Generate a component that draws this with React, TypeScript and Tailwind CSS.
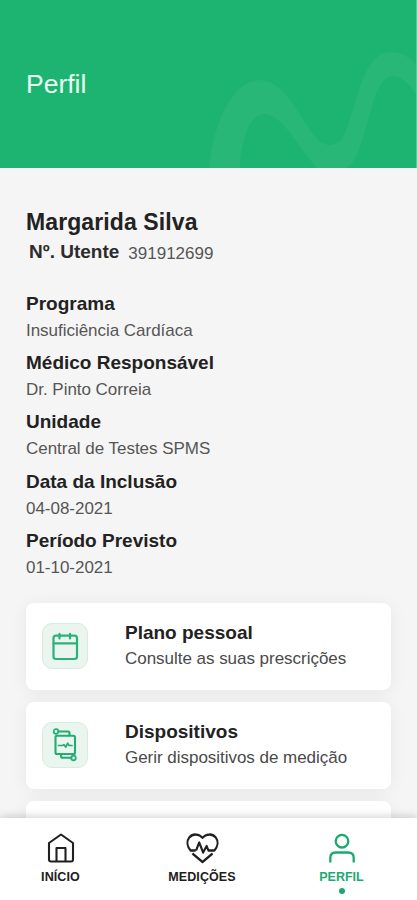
import type { ReactNode } from 'react'

interface Field {
  label: string
  value: string
}

const fields: Field[] = [
  { label: 'Programa', value: 'Insuficiência Cardíaca' },
  { label: 'Médico Responsável', value: 'Dr. Pinto Correia' },
  { label: 'Unidade', value: 'Central de Testes SPMS' },
  { label: 'Data da Inclusão', value: '04-08-2021' },
  { label: 'Período Previsto', value: '01-10-2021' },
]

function CalendarIcon() {
  return (
    <svg className="shrink-0" width="46" height="46" viewBox="0 0 46 46" fill="none" stroke="#2bb27b" strokeWidth="2.2" strokeLinecap="round" strokeLinejoin="round">
      <rect x="11.5" y="12.7" width="23.5" height="23.3" rx="2.5" />
      <path d="M11.5 20.3H35M17.5 10.9v4.600M28 10.900v4.600" />
    </svg>
  )
}

function DeviceIcon() {
  return (
    <svg className="shrink-0" width="46" height="46" viewBox="0 0 46 46" fill="none" stroke="#23ad73" strokeWidth="2.1" strokeLinecap="round" strokeLinejoin="round">
      <rect x="13.5" y="13.8" width="19.5" height="18.2" rx="1.5" />
      <circle cx="14" cy="9.5" r="2.3" strokeWidth="1.7" />
      <path d="M16.5 9.5h9.500q1.500 0 1.500 1.500V13M19 32.500V34q0 1.800 1.800 1.800h8.700" />
      <circle cx="31.500" cy="36" r="2.300" strokeWidth="1.700" />
      <path d="M16.500 23.500h4l1.500-.8 1.700 2.300 2-3.800 1.300 2.300h3" strokeWidth="1.700" />
    </svg>
  )
}

function HomeIcon() {
  return (
    <svg width="30" height="32" viewBox="0 0 30 32" fill="none" stroke="currentColor" strokeWidth="2.100" strokeLinejoin="round">
      <path d="M3 11 15 2.500 27 11v16.500q0 2-2 2H5q-2 0-2-2z" />
      <path d="M10.500 29.500V16h9v13.500" />
    </svg>
  )
}

function HeartIcon() {
  return (
    <svg width="33" height="32" viewBox="0 0 36 32" preserveAspectRatio="none" fill="none" stroke="currentColor" strokeWidth="2.300" strokeLinejoin="round">
      <path d="M10.500 18.500H5C1 14 .5 9 3.500 5.500 7.500 1 14.500 2 18 5.800 21.500 2 28.500 1 32.500 5.500c3 3.500 2.500 8.500-1.500 13h-6.500l-2-4.500-3.800 6.500-4.300-10-3.400 8" />
      <path d="M7 21.500 18 30l11-8.500" />
    </svg>
  )
}

function UserIcon() {
  return (
    <svg width="30" height="32" viewBox="0 0 30 32" fill="none" stroke="currentColor" strokeWidth="2.300">
      <circle cx="15" cy="9.200" r="6.300" />
      <path d="M3.300 30.500V26q0-5.500 5.500-5.500h12.400q5.500 0 5.500 5.500v4.500" />
    </svg>
  )
}

function Card({ icon, title, text }: { icon: ReactNode; title: string; text: string }) {
  return (
    <div className="flex h-[87px] items-center rounded-lg bg-white pl-4 shadow-[0_2px_18px_rgba(0,0,0,0.06)]">
      <div className="flex size-[46px] items-center justify-center rounded-[10px] border border-[#d5eddf] bg-[#e9f5ee]">
        {icon}
      </div>
      <div className="ml-[37px]">
        <h3 className="text-[19px] leading-[26px] font-bold whitespace-nowrap text-[#222]">{title}</h3>
        <p className="text-[17px] leading-[26px] tracking-[-0.03px] whitespace-nowrap text-[#4a4a4a]">{text}</p>
      </div>
    </div>
  )
}

export default function App() {
  return (
    <div className="flex h-[900px] w-[417px] flex-col overflow-hidden bg-[#f5f5f5] font-['Liberation_Sans',sans-serif]">
      <header className="relative h-[168px] shrink-0 border-r border-[#5cc797] bg-[#1db471]">
        <svg className="absolute inset-0" width="416" height="168" viewBox="0 0 416 168" fill="#28b776">
          <path d="M209 168C214 118 235 80 259 80C288 80 301 124 320 142Q331 149 342 139C356 116 360 52 391 52Q405 52 417 65V96Q405 76 393 76C374 76 371 121 357 154Q353 164 346 168H318C303 156 284 114 264 114C251 114 241 137 240 168z" />
        </svg>
        <h1 className="relative pt-[69px] pl-[26px] text-[26.5px] leading-[30px] text-[#eafff3]">Perfil</h1>
      </header>

      <main className="min-h-0 flex-1 overflow-hidden px-[26px] pt-[40px]">
        <h2 className="text-[23px] leading-[28px] font-bold tracking-[0.1px] text-[#222]">Margarida Silva</h2>
        <div className="flex h-[30px] items-baseline pl-[3px] leading-[32px]">
          <span className="text-[19px] font-bold text-[#2c2c2c]">Nº. Utente</span>
          <span className="relative top-px ml-[9px] text-[17px] text-[#555]">391912699</span>
        </div>

        <dl className="mt-[24px]">
          {fields.map((field) => (
            <div key={field.label} className="h-[59.2px]">
              <dt className="text-[19px] leading-[28px] font-bold text-[#222]">{field.label}</dt>
              <dd className="text-[17px] leading-[25px] tracking-[-0.03px] text-[#555]">{field.value}</dd>
            </div>
          ))}
        </dl>

        <div className="mt-[17px] flex flex-col gap-3">
          <Card icon={<CalendarIcon />} title="Plano pessoal" text="Consulte as suas prescrições" />
          <Card icon={<DeviceIcon />} title="Dispositivos" text="Gerir dispositivos de medição" />
          <div className="h-[87px] rounded-lg bg-white shadow-[0_2px_18px_rgba(0,0,0,0.06)]" />
        </div>
      </main>

      <nav className="relative flex h-[82px] shrink-0 bg-white px-[1px] pt-[14px] text-[12.5px] font-bold text-[#202020] shadow-[0_-2px_8px_rgba(0,0,0,0.16)]">
        <div className="flex w-[119px] flex-col items-center">
          <HomeIcon />
          <span className="mt-[5px] leading-4 tracking-[0.1px]">INÍCIO</span>
        </div>
        <div className="flex w-[164px] flex-col items-center">
          <HeartIcon />
          <span className="mt-[5px] leading-4 tracking-[0.1px]">MEDIÇÕES</span>
        </div>
        <div className="flex w-[115px] flex-col items-center text-[#1ba970]">
          <UserIcon />
          <span className="mt-[5px] leading-4">PERFIL</span>
          <span className="mt-[3px] size-[6px] rounded-full bg-current" />
        </div>
      </nav>
    </div>
  )
}
